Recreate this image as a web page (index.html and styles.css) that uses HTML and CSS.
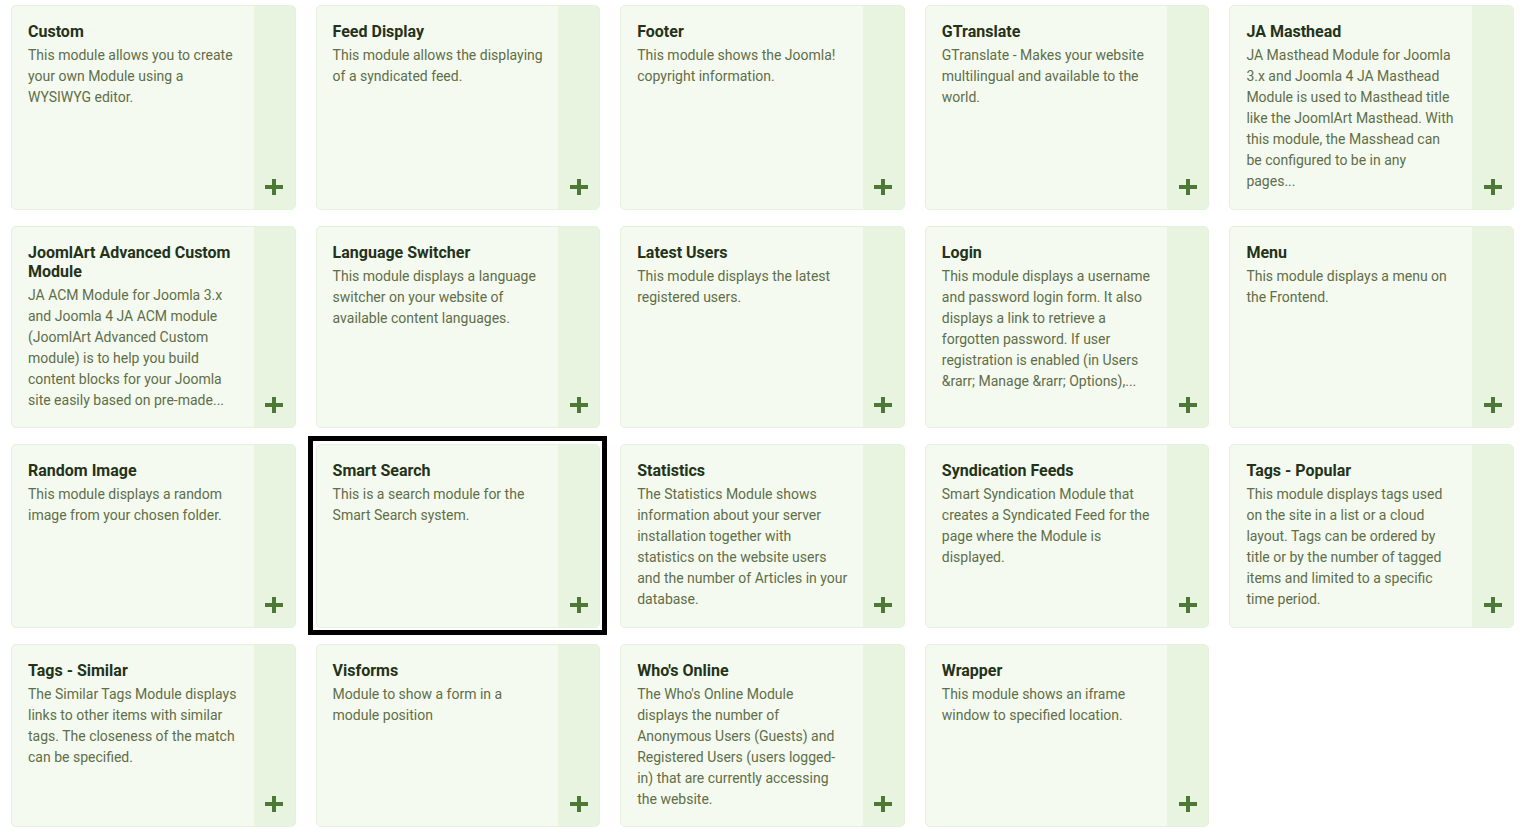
FILE: index.html
```html
<!DOCTYPE html>
<html lang="en">
<head>
  <meta charset="UTF-8">
  <meta name="viewport" content="width=device-width, initial-scale=1.0">
  <title>Select a Module Type</title>
  <link rel="stylesheet" href="styles.css">
</head>
<body>

  <div class="modules">

    <a class="module" href="#">
      <div class="module-body">
        <h3>Custom</h3>
        <p>This module allows you to create your own Module using a WYSIWYG editor.</p>
      </div>
      <span class="module-add"><svg viewBox="0 0 18 16"><path d="M7 0h4v6h7v4h-7v6H7v-6H0V6h7z"/></svg></span>
    </a>

    <a class="module" href="#">
      <div class="module-body">
        <h3>Feed Display</h3>
        <p>This module allows the displaying of a syndicated feed.</p>
      </div>
      <span class="module-add"><svg viewBox="0 0 18 16"><path d="M7 0h4v6h7v4h-7v6H7v-6H0V6h7z"/></svg></span>
    </a>

    <a class="module" href="#">
      <div class="module-body">
        <h3>Footer</h3>
        <p>This module shows the Joomla! copyright information.</p>
      </div>
      <span class="module-add"><svg viewBox="0 0 18 16"><path d="M7 0h4v6h7v4h-7v6H7v-6H0V6h7z"/></svg></span>
    </a>

    <a class="module" href="#">
      <div class="module-body">
        <h3>GTranslate</h3>
        <p>GTranslate - Makes your website multilingual and available to the world.</p>
      </div>
      <span class="module-add"><svg viewBox="0 0 18 16"><path d="M7 0h4v6h7v4h-7v6H7v-6H0V6h7z"/></svg></span>
    </a>

    <a class="module" href="#">
      <div class="module-body">
        <h3>JA Masthead</h3>
        <p>JA Masthead Module for Joomla 3.x and Joomla 4 JA Masthead Module is used to Masthead title like the JoomlArt Masthead. With this module, the Masshead can be configured to be in any pages...</p>
      </div>
      <span class="module-add"><svg viewBox="0 0 18 16"><path d="M7 0h4v6h7v4h-7v6H7v-6H0V6h7z"/></svg></span>
    </a>

    <a class="module" href="#">
      <div class="module-body">
        <h3>JoomlArt Advanced Custom Module</h3>
        <p>JA ACM Module for Joomla 3.x and Joomla 4 JA ACM module (JoomlArt Advanced Custom module) is to help you build content blocks for your Joomla site easily based on pre-made...</p>
      </div>
      <span class="module-add"><svg viewBox="0 0 18 16"><path d="M7 0h4v6h7v4h-7v6H7v-6H0V6h7z"/></svg></span>
    </a>

    <a class="module" href="#">
      <div class="module-body">
        <h3>Language Switcher</h3>
        <p>This module displays a language switcher on your website of available content languages.</p>
      </div>
      <span class="module-add"><svg viewBox="0 0 18 16"><path d="M7 0h4v6h7v4h-7v6H7v-6H0V6h7z"/></svg></span>
    </a>

    <a class="module" href="#">
      <div class="module-body">
        <h3>Latest Users</h3>
        <p>This module displays the latest registered users.</p>
      </div>
      <span class="module-add"><svg viewBox="0 0 18 16"><path d="M7 0h4v6h7v4h-7v6H7v-6H0V6h7z"/></svg></span>
    </a>

    <a class="module" href="#">
      <div class="module-body">
        <h3>Login</h3>
        <p>This module displays a username and password login form. It also displays a link to retrieve a forgotten password. If user registration is enabled (in Users &amp;rarr; Manage &amp;rarr; Options),...</p>
      </div>
      <span class="module-add"><svg viewBox="0 0 18 16"><path d="M7 0h4v6h7v4h-7v6H7v-6H0V6h7z"/></svg></span>
    </a>

    <a class="module" href="#">
      <div class="module-body">
        <h3>Menu</h3>
        <p>This module displays a menu on the Frontend.</p>
      </div>
      <span class="module-add"><svg viewBox="0 0 18 16"><path d="M7 0h4v6h7v4h-7v6H7v-6H0V6h7z"/></svg></span>
    </a>

    <a class="module" href="#">
      <div class="module-body">
        <h3>Random Image</h3>
        <p>This module displays a random image from your chosen folder.</p>
      </div>
      <span class="module-add"><svg viewBox="0 0 18 16"><path d="M7 0h4v6h7v4h-7v6H7v-6H0V6h7z"/></svg></span>
    </a>

    <a class="module focused" href="#">
      <div class="module-body">
        <h3>Smart Search</h3>
        <p>This is a search module for the Smart Search system.</p>
      </div>
      <span class="module-add"><svg viewBox="0 0 18 16"><path d="M7 0h4v6h7v4h-7v6H7v-6H0V6h7z"/></svg></span>
    </a>

    <a class="module" href="#">
      <div class="module-body">
        <h3>Statistics</h3>
        <p>The Statistics Module shows information about your server installation together with statistics on the website users and the number of Articles in your database.</p>
      </div>
      <span class="module-add"><svg viewBox="0 0 18 16"><path d="M7 0h4v6h7v4h-7v6H7v-6H0V6h7z"/></svg></span>
    </a>

    <a class="module" href="#">
      <div class="module-body">
        <h3>Syndication Feeds</h3>
        <p>Smart Syndication Module that creates a Syndicated Feed for the page where the Module is displayed.</p>
      </div>
      <span class="module-add"><svg viewBox="0 0 18 16"><path d="M7 0h4v6h7v4h-7v6H7v-6H0V6h7z"/></svg></span>
    </a>

    <a class="module" href="#">
      <div class="module-body">
        <h3>Tags - Popular</h3>
        <p>This module displays tags used on the site in a list or a cloud layout. Tags can be ordered by title or by the number of tagged items and limited to a specific time period.</p>
      </div>
      <span class="module-add"><svg viewBox="0 0 18 16"><path d="M7 0h4v6h7v4h-7v6H7v-6H0V6h7z"/></svg></span>
    </a>

    <a class="module" href="#">
      <div class="module-body">
        <h3>Tags - Similar</h3>
        <p>The Similar Tags Module displays links to other items with similar tags. The closeness of the match can be specified.</p>
      </div>
      <span class="module-add"><svg viewBox="0 0 18 16"><path d="M7 0h4v6h7v4h-7v6H7v-6H0V6h7z"/></svg></span>
    </a>

    <a class="module" href="#">
      <div class="module-body">
        <h3>Visforms</h3>
        <p>Module to show a form in a module position</p>
      </div>
      <span class="module-add"><svg viewBox="0 0 18 16"><path d="M7 0h4v6h7v4h-7v6H7v-6H0V6h7z"/></svg></span>
    </a>

    <a class="module" href="#">
      <div class="module-body">
        <h3>Who's Online</h3>
        <p>The Who's Online Module displays the number of Anonymous Users (Guests) and Registered Users (users logged-in) that are currently accessing the website.</p>
      </div>
      <span class="module-add"><svg viewBox="0 0 18 16"><path d="M7 0h4v6h7v4h-7v6H7v-6H0V6h7z"/></svg></span>
    </a>

    <a class="module" href="#">
      <div class="module-body">
        <h3>Wrapper</h3>
        <p>This module shows an iframe window to specified location.</p>
      </div>
      <span class="module-add"><svg viewBox="0 0 18 16"><path d="M7 0h4v6h7v4h-7v6H7v-6H0V6h7z"/></svg></span>
    </a>

  </div>

</body>
</html>
```

FILE: styles.css
```css
body {
  font-family: Roboto, "Liberation Sans", Arial, sans-serif;
  background-color: #fff;
  margin: 0;
}
.modules {
  display: grid;
  grid-template-columns: repeat(5, 1fr);
  column-gap: 20px;
  row-gap: 16px;
  padding: 5px 14px 12px 11px;
}
.module {
  position: relative;
  display: flex;
  background-color: #f4faf0;
  border: 1px solid #e4f1dc;
  border-radius: 5px;
  text-decoration: none;
}
/* keyboard focus ring, square like the browser default */
.module.focused::before {
  content: "";
  position: absolute;
  top: -9px;
  left: -9px;
  right: -8px;
  bottom: -8px;
  border: 5px solid #000;
  pointer-events: none;
}
.module-body {
  flex: 1;
  min-width: 0;
  padding: 16px 15px 16.5px 16px;
}
.module-body h3 {
  font-size: 16px;
  line-height: 19px;
  font-weight: 700;
  color: #243219;
  margin: 0 0 4px;
}
.module-body p {
  font-size: 14px;
  line-height: 21px;
  color: #5f6e48;
  margin: 0;
}
.module-add {
  width: 41px;
  flex-shrink: 0;
  display: flex;
  align-items: flex-end;
  justify-content: center;
  padding-bottom: 14px;
  background-color: #e8f4e0;
  border-radius: 0 4px 4px 0;
}
.module-add svg {
  width: 18px;
  height: 16px;
  fill: #4c7a36;
}
```
